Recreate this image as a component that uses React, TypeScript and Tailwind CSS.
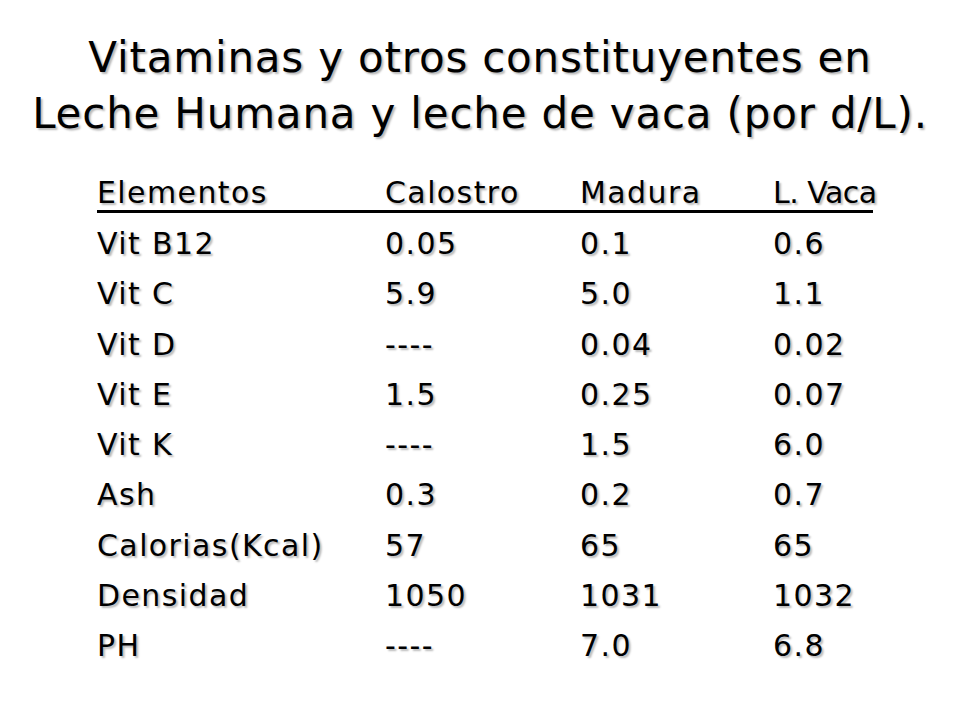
const rows = [
	{ name: "Vit B12", calostro: "0.05", madura: "0.1", vaca: "0.6" },
	{ name: "Vit C", calostro: "5.9", madura: "5.0", vaca: "1.1" },
	{ name: "Vit D", calostro: "----", madura: "0.04", vaca: "0.02" },
	{ name: "Vit E", calostro: "1.5", madura: "0.25", vaca: "0.07" },
	{ name: "Vit K", calostro: "----", madura: "1.5", vaca: "6.0" },
	{ name: "Ash", calostro: "0.3", madura: "0.2", vaca: "0.7" },
	{ name: "Calorias(Kcal)", calostro: "57", madura: "65", vaca: "65" },
	{ name: "Densidad", calostro: "1050", madura: "1031", vaca: "1032" },
	{ name: "PH", calostro: "----", madura: "7.0", vaca: "6.8" },
];

const grid = "grid grid-cols-[288px_195px_193px_1fr] whitespace-nowrap";

export default function App() {
	return (
		<div className="h-[720px] w-[960px] overflow-hidden bg-white font-['DejaVu_Sans',sans-serif] text-black [text-shadow:2px_2px_2px_rgba(0,0,0,0.28)]">
			<h1 className="whitespace-nowrap pt-[30px] text-center text-[42px] leading-[56px] tracking-[0.8px]">
				Vitaminas y otros constituyentes en
				<br />
				Leche Humana y leche de vaca (por d/L).
			</h1>

			<div className="ml-[97px] mt-[26px] w-[776px] text-[30px] tracking-[1.4px]">
				<div className={`${grid} border-b-[3px] border-black pt-[8px] leading-[34px]`}>
					<span>Elementos</span>
					<span>Calostro</span>
					<span>Madura</span>
					<span className="tracking-[-0.5px]">L. Vaca</span>
				</div>
				<div className="pt-[6px] leading-[50.3px]">
					{rows.map((row) => (
						<div key={row.name} className={grid}>
							<span>{row.name}</span>
							<span>{row.calostro}</span>
							<span>{row.madura}</span>
							<span>{row.vaca}</span>
						</div>
					))}
				</div>
			</div>
		</div>
	);
}
